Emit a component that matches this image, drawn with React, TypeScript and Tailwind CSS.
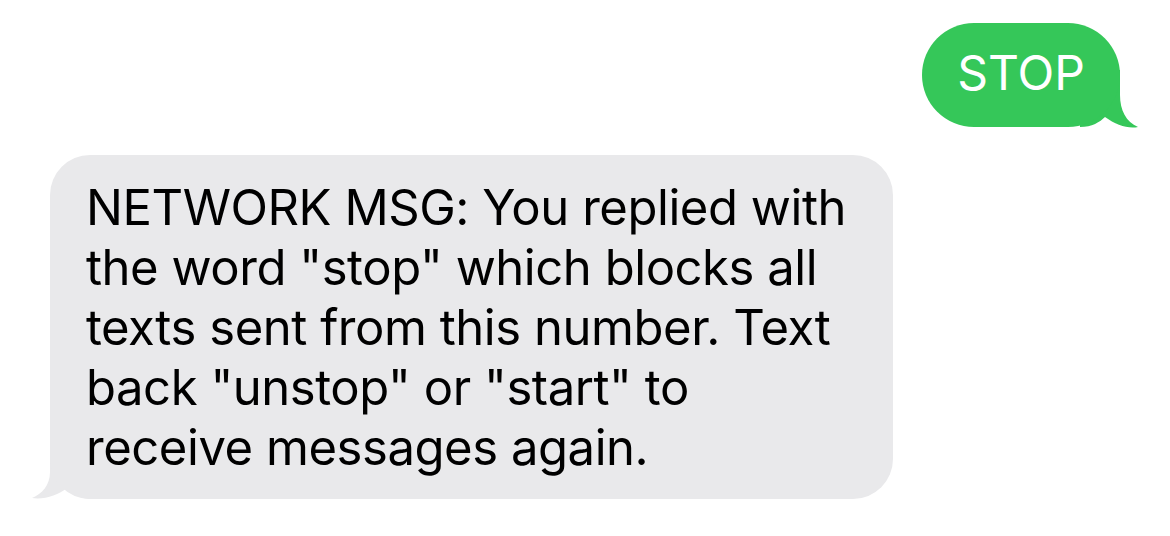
import React from "react";

export default function App() {
  return (
    <div
      className="w-[1170px] h-[536px] bg-white overflow-hidden flex flex-col"
      style={{ fontFamily: "Inter, 'Liberation Sans', sans-serif" }}
    >
      <div className="flex justify-end pr-[50px] pt-[23px]">
        <div className="relative">
          <svg
            className="absolute left-[158px] top-[47px]"
            width="60"
            height="60"
            viewBox="0 0 60 60"
          >
            <path
              d="M40,0 L40,25 C40,40 46,52 58,57 C48,59 36,55 25,47 C20,52 12,57 0,57 L0,0 Z"
              fill="#35c759"
            />
          </svg>
          <div className="relative w-[198px] h-[104px] rounded-[52px] bg-[#35c759] flex items-center justify-center text-white text-[48px] leading-none pb-[4px]">
            STOP
          </div>
        </div>
      </div>
      <div className="flex pl-[50px] pt-[28px]">
        <div className="relative">
          <svg
            className="absolute left-[-20px] top-[284px]"
            width="60"
            height="60"
            viewBox="0 0 60 60"
          >
            <path
              d="M20,0 L20,33 C20,46 12,55 2,59 C14,61 28,56 37,49 C44,56 52,60 60,60 L60,0 Z"
              fill="#e9e9eb"
            />
          </svg>
          <div className="relative w-[843px] h-[344px] rounded-[40px] bg-[#e9e9eb] pl-[36px] pt-[23px] text-black text-[49px] leading-[60px] tracking-[-0.45px]">
            <div>NETWORK MSG: You replied with</div>
            <div>the word "stop" which blocks all</div>
            <div>texts sent from this number. Text</div>
            <div>back "unstop" or "start" to</div>
            <div>receive messages again.</div>
          </div>
        </div>
      </div>
    </div>
  );
}
